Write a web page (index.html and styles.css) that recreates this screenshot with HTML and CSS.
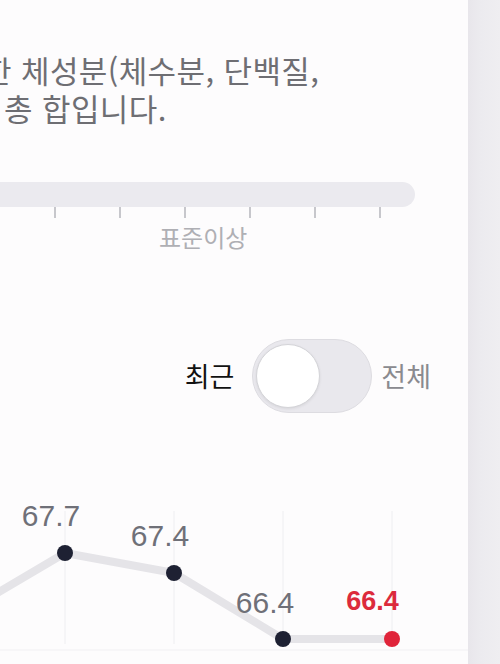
FILE: index.html
```html
<!DOCTYPE html>
<html lang="ko">
<head>
<meta charset="utf-8">
<link rel="stylesheet" href="styles.css">
</head>
<body>
<div class="page">
  <main class="card">
    <p class="desc">
      <span class="line line1">한 체성분(체수분, 단백질,</span>
      <span class="line line2">의 총 합입니다.</span>
    </p>

    <section class="gauge">
      <div class="bar"></div>
      <div class="ticks">
        <span class="tick"></span><span class="tick"></span><span class="tick"></span>
        <span class="tick"></span><span class="tick"></span><span class="tick"></span>
      </div>
      <div class="gauge-label">표준이상</div>
    </section>

    <div class="toggle-row">
      <span class="opt opt-on">최근</span>
      <span class="switch"><span class="thumb"></span></span>
      <span class="opt opt-off">전체</span>
    </div>

    <svg class="chart" viewBox="0 470 468 194" width="468" height="194">
      <line class="grid" x1="65" y1="510" x2="65" y2="643"/>
      <line class="grid" x1="174" y1="510" x2="174" y2="643"/>
      <line class="grid" x1="283" y1="510" x2="283" y2="643"/>
      <line class="grid" x1="392" y1="510" x2="392" y2="643"/>
      <line class="base" x1="0" y1="649" x2="468" y2="649"/>
      <polyline class="trend" points="-30,608 65,552 174,572 283,638 392,638"/>
      <circle class="dot" cx="65" cy="552" r="8"/>
      <circle class="dot" cx="174" cy="572" r="8"/>
      <circle class="dot" cx="283" cy="638" r="8"/>
      <circle class="dot dot-now" cx="392" cy="638" r="8"/>
      <text class="val" x="51" y="525">67.7</text>
      <text class="val" x="160" y="545">67.4</text>
      <text class="val" x="265" y="612">66.4</text>
      <text class="val val-now" x="372.5" y="609">66.4</text>
    </svg>
  </main>
  <aside class="side"></aside>
</div>
</body>
</html>
```

FILE: styles.css
```css
html, body {
  margin: 0;
  padding: 0;
  background: #fdfcfd;
}

.page {
  display: flex;
  width: 500px;
  height: 664px;
  overflow: hidden;
}

.card {
  width: 468px;
  flex: none;
  overflow: hidden;
  background: #fdfcfd;
  font-family: "Noto Sans CJK KR", "Noto Sans", sans-serif;
}

.side {
  flex: 1;
  background: linear-gradient(90deg, #e8e6eb 0%, #ecebef 40%, #efeef1 100%);
}

.desc {
  margin: 51px 0 0 0;
  font-size: 31px;
  line-height: 38px;
  letter-spacing: 0.4px;
  color: #6e6e73;
  white-space: nowrap;
}

.line {
  display: block;
}

.line1 {
  margin-left: -17px;
}

.line2 {
  margin-left: -34px;
}

.gauge {
  margin-top: 55px;
}

.bar {
  margin-left: -20px;
  width: 435px;
  height: 25px;
  border-radius: 13px;
  background: #ebeaef;
}

.ticks {
  display: flex;
  gap: 63.5px;
  padding-left: 54px;
}

.tick {
  width: 1.5px;
  height: 11px;
  background: #c7c7cc;
}

.gauge-label {
  margin-top: 5px;
  padding-left: 159px;
  font-size: 24px;
  line-height: 28px;
  color: #afafb4;
}

.toggle-row {
  display: flex;
  justify-content: flex-end;
  align-items: center;
  margin-top: 88px;
  padding-right: 37px;
}

.opt {
  font-size: 27px;
  line-height: 34px;
}

.opt-on {
  color: #111;
  margin-right: 18px;
}

.opt-off {
  color: #8a8a8f;
  margin-left: 9px;
}

.switch {
  display: flex;
  align-items: center;
  box-sizing: border-box;
  width: 120px;
  height: 74px;
  padding: 0 3px;
  border-radius: 37px;
  background: #e9e8ed;
  border: 1.5px solid #dddce1;
}

.thumb {
  width: 64px;
  height: 64px;
  border-radius: 50%;
  background: #ffffff;
  border: 1.5px solid #d4d4d8;
  box-sizing: border-box;
  box-shadow: 0 1px 3px rgba(0, 0, 0, 0.08);
}

.chart {
  display: block;
  margin-top: 58px;
  overflow: visible;
}

.grid {
  stroke: #eeeef1;
  stroke-width: 1;
}

.base {
  stroke: #f1f0f3;
  stroke-width: 1;
}

.trend {
  fill: none;
  stroke: #e5e4e8;
  stroke-width: 8;
  stroke-linejoin: round;
  stroke-linecap: round;
}

.dot {
  fill: #1e2133;
}

.dot-now {
  fill: #e0243a;
}

.val {
  font-family: "Liberation Sans", Arial, sans-serif;
  font-size: 30px;
  fill: #6f7078;
  text-anchor: middle;
}

.val-now {
  font-size: 27px;
  font-weight: 700;
  fill: #dc2a3c;
}
```
